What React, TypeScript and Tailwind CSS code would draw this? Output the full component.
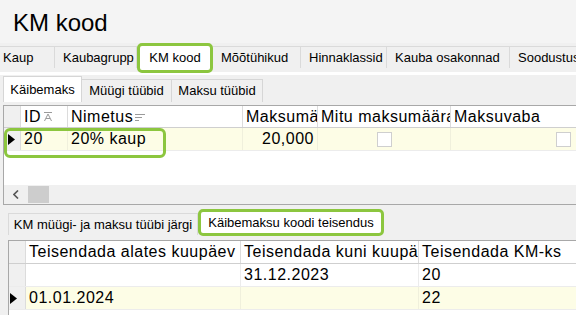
import React from 'react';

const font = { fontFamily: '"Liberation Sans", Arial, sans-serif' };

const topTabs = [
  { label: 'Kaup', w: 55 },
  { label: 'Kaubagrupp', w: 82 },
  { label: 'KM kood', w: 76, active: true },
  { label: 'Mõõtühikud', w: 88 },
  { label: 'Hinnaklassid', w: 86 },
  { label: 'Kauba osakonnad', w: 123 },
  { label: 'Soodustused', w: 80 },
];

const subTabs = [
  { label: 'Käibemaks', w: 79, active: true },
  { label: 'Müügi tüübid', w: 90 },
  { label: 'Maksu tüübid', w: 91 },
];

const SortIcon = () => (
  <svg width="10" height="11" viewBox="0 0 10 11" className="ml-[2px] shrink-0">
    <path d="M1 1.5h8" stroke="#9a9a9a" strokeWidth="1" />
    <path d="M1.5 10L5 3l3.5 7M3 7.5h4" stroke="#9a9a9a" strokeWidth="1" fill="none" />
  </svg>
);

const FilterIcon = () => (
  <svg width="10" height="10" viewBox="0 0 10 10" className="ml-[2px] shrink-0">
    <path d="M0 2.5h10M0 5.5h7M0 8.5h4" stroke="#9a9a9a" strokeWidth="1" />
  </svg>
);

const RowArrow = () => (
  <svg width="7" height="11" viewBox="0 0 7 11" className="shrink-0">
    <path d="M0 0l7 5.5L0 11z" fill="#000" />
  </svg>
);

const Check = () => <div className="w-[15px] h-[15px] bg-white border border-[#cfcfcf]" />;

const Cell = ({ w, children, className = '' }: { w: number; children?: React.ReactNode; className?: string }) => (
  <div
    className={`h-full shrink-0 flex items-center overflow-hidden whitespace-nowrap border-r border-[#dcdcdc] px-[3px] ${className}`}
    style={{ width: w }}
  >
    {children}
  </div>
);

export default function App() {
  return (
    <div className="w-[576px] h-[315px] overflow-hidden bg-[#f0f0f0] text-black relative" style={font}>
      {/* title */}
      <div className="h-[43px] pl-[13px] flex items-center bg-[#f4f4f4] text-[24px] leading-none pt-[2px]">KM kood</div>

      {/* top tabs */}
      <div className="h-[30px] flex items-end bg-[#f0f0f0] border-b border-white">
        {topTabs.map((t) =>
          t.active ? (
            <div
              key={t.label}
              className="h-[30px] bg-white border-[3px] border-[#8cc63f] rounded-[5px] flex items-center justify-center text-[13px] shrink-0 -mb-[1px]"
              style={{ width: t.w }}
            >
              {t.label}
            </div>
          ) : (
            <div
              key={t.label}
              className="h-[22px] mb-[4px] border-r border-t border-[#dadada] bg-[#f0f0f0] flex items-center pl-[8px] first:pl-[3px] text-[13px] overflow-hidden whitespace-nowrap shrink-0"
              style={{ width: t.w }}
            >
              {t.label}
            </div>
          )
        )}
      </div>

      {/* sub tabs */}
      <div className="h-[29px] flex items-end pl-[3px] pt-[2px] bg-[#f0f0f0] border-t-[2px] border-white">
        {subTabs.map((t) => (
          <div
            key={t.label}
            className={`flex items-center justify-center text-[13px] shrink-0 border-r border-t border-[#d6d6d6] ${
              t.active ? 'h-[26px] bg-white border-l' : 'h-[23px] bg-[#f0f0f0]'
            }`}
            style={{ width: t.w }}
          >
            {t.label}
          </div>
        ))}
      </div>

      {/* grid 1 */}
      <div className="ml-[3px] mt-[3px] h-[100px] bg-white border-l border-t border-b border-[#a8a8a8] flex flex-col text-[16px] tracking-[0.5px] relative">
        <div className="h-[22px] flex border-b border-[#cfcfcf]">
          <Cell w={17} className="bg-[#f0f0f0]" />
          <Cell w={47}>ID<SortIcon /></Cell>
          <Cell w={175}>Nimetus<FilterIcon /></Cell>
          <Cell w={75}>Maksumäär</Cell>
          <Cell w={133}>Mitu maksumäära</Cell>
          <Cell w={130} className="border-r-0">Maksuvaba</Cell>
        </div>
        <div className="h-[23px] flex bg-[#fdfde6] border-b border-[#ececec]">
          <Cell w={17} className="bg-[#f0f0f0] pl-[4px] pr-0"><RowArrow /></Cell>
          <Cell w={47} className="border-[#f0f0dc]">20</Cell>
          <Cell w={175} className="border-[#f0f0dc]">20% kaup</Cell>
          <Cell w={75} className="justify-end border-[#f0f0dc]">20,000</Cell>
          <Cell w={133} className="justify-center border-[#f0f0dc]"><Check /></Cell>
          <Cell w={130} className="justify-end pr-[10px] border-r-0"><Check /></Cell>
        </div>
        <div className="flex-1" />
        <div className="h-[19px] bg-[#f0f0f0] flex items-center">
          <div className="w-[24px] flex justify-center">
            <svg width="6" height="9" viewBox="0 0 6 9">
              <path d="M5 0.5L1 4.5l4 4" stroke="#555" strokeWidth="1.6" fill="none" />
            </svg>
          </div>
          <div className="w-[21px] h-[17px] bg-[#cdcdcd]" />
        </div>
        <div className="absolute left-0 top-[22px] w-[162px] h-[30px] border-[3px] border-[#8cc63f] rounded-[6px]" />
      </div>

      {/* bottom tabs */}
      <div className="h-[35px] flex items-end pl-[8px] pb-[5px]">
        <div className="h-[22px] w-[190px] flex items-center justify-center text-[13px] border-t border-r border-l border-[#dadada]">
          KM müügi- ja maksu tüübi järgi
        </div>
        <div className="h-[27px] w-[186px] -mb-[1px] bg-white border-[3px] border-[#8cc63f] rounded-[5px] flex items-center justify-center text-[13px]">
          Käibemaksu koodi teisendus
        </div>
      </div>

      {/* grid 2 */}
      <div className="ml-[8px] h-[80px] bg-white border-l border-t border-[#a8a8a8] flex flex-col text-[16px] tracking-[0.5px]">
        <div className="h-[23px] flex border-b border-[#cfcfcf]">
          <Cell w={17} className="bg-[#f0f0f0]" />
          <Cell w={215}>Teisendada alates kuupäev</Cell>
          <Cell w={178}>Teisendada kuni kuupäev</Cell>
          <Cell w={160} className="border-r-0">Teisendada KM-ks</Cell>
        </div>
        <div className="h-[23px] flex border-b border-[#ececec]">
          <Cell w={17} className="bg-[#f0f0f0]" />
          <Cell w={215} className="border-[#ececec]" />
          <Cell w={178} className="border-[#ececec]">31.12.2023</Cell>
          <Cell w={160} className="border-r-0">20</Cell>
        </div>
        <div className="h-[23px] flex bg-[#fdfde6] border-b border-[#ececec]">
          <Cell w={17} className="bg-[#f0f0f0] pl-[1px]"><RowArrow /></Cell>
          <Cell w={215} className="border-[#f0f0dc]">01.01.2024</Cell>
          <Cell w={178} className="border-[#f0f0dc]" />
          <Cell w={160} className="border-r-0">22</Cell>
        </div>
      </div>
    </div>
  );
}
